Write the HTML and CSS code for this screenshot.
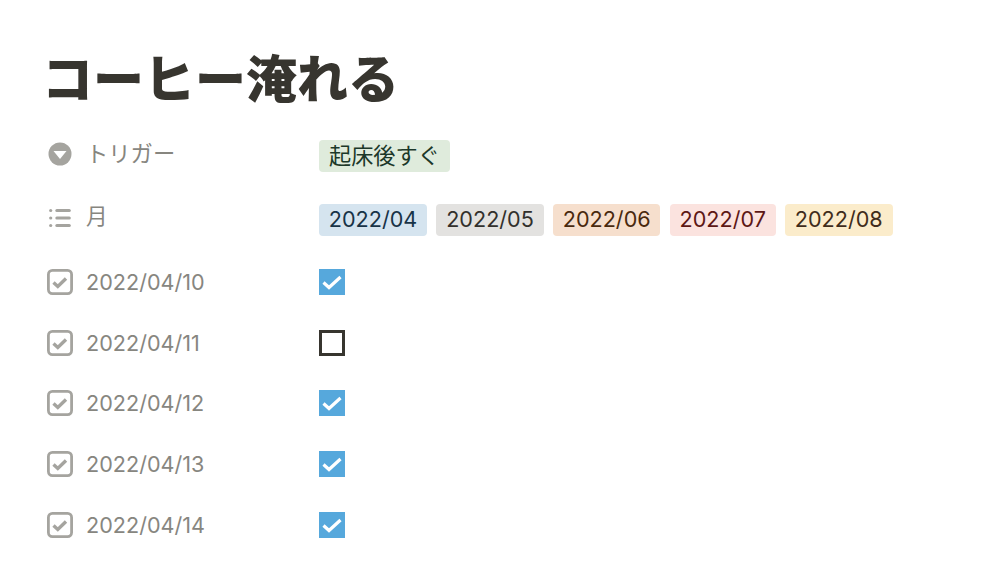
FILE: index.html
```html
<!DOCTYPE html>
<html lang="ja">
<head>
<meta charset="utf-8">
<title>コーヒー淹れる</title>
<link rel="stylesheet" href="styles.css">
</head>
<body>
<main class="page">
  <h1 class="title">コーヒー淹れる</h1>
  <div class="props">
    <div class="row row-select">
      <div class="name">
        <svg class="icon" viewBox="0 0 26 26"><circle cx="13" cy="13" r="11.500" fill="#a5a49f"/><path d="M6.500 10h13l-6.500 8z" fill="#fff"/></svg>
        <span>トリガー</span>
      </div>
      <div class="value"><span class="tag green">起床後すぐ</span></div>
    </div>
    <div class="row row-multi">
      <div class="name">
        <svg class="icon" viewBox="0 0 26 26"><g fill="#a5a49f"><circle cx="3.700" cy="5.500" r="1.600"/><circle cx="3.700" cy="13" r="1.600"/><circle cx="3.700" cy="20.500" r="1.600"/><rect x="8.300" y="4" width="15.500" height="3" rx="1.500"/><rect x="8.300" y="11.500" width="15.500" height="3" rx="1.500"/><rect x="8.300" y="19" width="15.500" height="3" rx="1.500"/></g></svg>
        <span>月</span>
      </div>
      <div class="value">
        <span class="tag blue">2022/04</span>
        <span class="tag gray">2022/05</span>
        <span class="tag orange">2022/06</span>
        <span class="tag red">2022/07</span>
        <span class="tag yellow">2022/08</span>
      </div>
    </div>
    <div class="row">
      <div class="name">
        <svg class="icon" viewBox="0 0 26 26"><rect x="1.400" y="1.400" width="23.200" height="23.200" rx="4" fill="none" stroke="#a5a49f" stroke-width="2.800"/><path d="M6.500 13.500l4.300 4 8.200-8" fill="none" stroke="#a5a49f" stroke-width="3.400"/></svg>
        <span>2022/04/10</span>
      </div>
      <div class="value"><span class="check on"><svg viewBox="0 0 26 26"><path d="M4.500 13.500l5.500 5 11.500-10.500" fill="none" stroke="#fff" stroke-width="3.200"/></svg></span></div>
    </div>
    <div class="row">
      <div class="name">
        <svg class="icon" viewBox="0 0 26 26"><rect x="1.400" y="1.400" width="23.200" height="23.200" rx="4" fill="none" stroke="#a5a49f" stroke-width="2.800"/><path d="M6.500 13.500l4.300 4 8.200-8" fill="none" stroke="#a5a49f" stroke-width="3.400"/></svg>
        <span>2022/04/11</span>
      </div>
      <div class="value"><span class="check off"></span></div>
    </div>
    <div class="row">
      <div class="name">
        <svg class="icon" viewBox="0 0 26 26"><rect x="1.400" y="1.400" width="23.200" height="23.200" rx="4" fill="none" stroke="#a5a49f" stroke-width="2.800"/><path d="M6.500 13.500l4.300 4 8.200-8" fill="none" stroke="#a5a49f" stroke-width="3.400"/></svg>
        <span>2022/04/12</span>
      </div>
      <div class="value"><span class="check on"><svg viewBox="0 0 26 26"><path d="M4.500 13.500l5.500 5 11.500-10.500" fill="none" stroke="#fff" stroke-width="3.200"/></svg></span></div>
    </div>
    <div class="row">
      <div class="name">
        <svg class="icon" viewBox="0 0 26 26"><rect x="1.400" y="1.400" width="23.200" height="23.200" rx="4" fill="none" stroke="#a5a49f" stroke-width="2.800"/><path d="M6.500 13.500l4.300 4 8.200-8" fill="none" stroke="#a5a49f" stroke-width="3.400"/></svg>
        <span>2022/04/13</span>
      </div>
      <div class="value"><span class="check on"><svg viewBox="0 0 26 26"><path d="M4.500 13.500l5.500 5 11.500-10.500" fill="none" stroke="#fff" stroke-width="3.200"/></svg></span></div>
    </div>
    <div class="row">
      <div class="name">
        <svg class="icon" viewBox="0 0 26 26"><rect x="1.400" y="1.400" width="23.200" height="23.200" rx="4" fill="none" stroke="#a5a49f" stroke-width="2.800"/><path d="M6.500 13.500l4.300 4 8.200-8" fill="none" stroke="#a5a49f" stroke-width="3.400"/></svg>
        <span>2022/04/14</span>
      </div>
      <div class="value"><span class="check on"><svg viewBox="0 0 26 26"><path d="M4.500 13.500l5.500 5 11.500-10.500" fill="none" stroke="#fff" stroke-width="3.200"/></svg></span></div>
    </div>
  </div>
</main>
</body>
</html>
```
FILE: styles.css
```css
* { box-sizing: border-box; }
html, body { margin: 0; height: 100%; background: #fff; overflow: hidden; }
body { font-family: Inter, "Noto Sans CJK JP", sans-serif; color: #37352f; }
.page { padding: 46px 0 0 47px; }
.title {
  margin: 0 0 19px -5px;
  font-size: 51px;
  line-height: 60px;
  font-weight: 900;
  font-family: "Noto Sans CJK JP", sans-serif;
  color: #37352f;
}
.props { display: flex; flex-direction: column; }
.row { display: grid; grid-template-columns: 272px 1fr; align-items: center; height: 60.75px; }
.row-select { height: 64px; margin-top: -1px; }
.row-multi { height: 64px; margin-bottom: -0.500px; }
.name { display: flex; align-items: center; gap: 13px; font-size: 21.600px; line-height: 26px; color: #87867f; }
.row-select .name { margin-top: -4px; font-size: 22.300px; }
.row-multi .name { margin-top: -4px; }
.row-multi .name span { margin-bottom: 4px; }
.icon { width: 26px; height: 26px; flex: none; }
.value { display: flex; align-items: center; gap: 9.300px; }
.tag { display: block; height: 32px; line-height: 31px; padding: 0 9.800px; border-radius: 4px; font-size: 21.600px; }
.tag.green { font-size: 22.200px; padding: 0 10px; }
.green { background: #dfebdc; color: #1c3829; }
.blue { background: #d5e4ef; color: #183347; }
.gray { background: #e3e2e0; color: #32302c; }
.orange { background: #f6dfcd; color: #49290e; }
.red { background: #fbe3df; color: #5d1715; }
.yellow { background: #fbeccb; color: #402c1b; }
.check { display: block; width: 26px; height: 26px; }
.check svg { display: block; width: 26px; height: 26px; }
.check.on { background: #56a8dc; }
.check.off { border: 3px solid #37352f; }
```
